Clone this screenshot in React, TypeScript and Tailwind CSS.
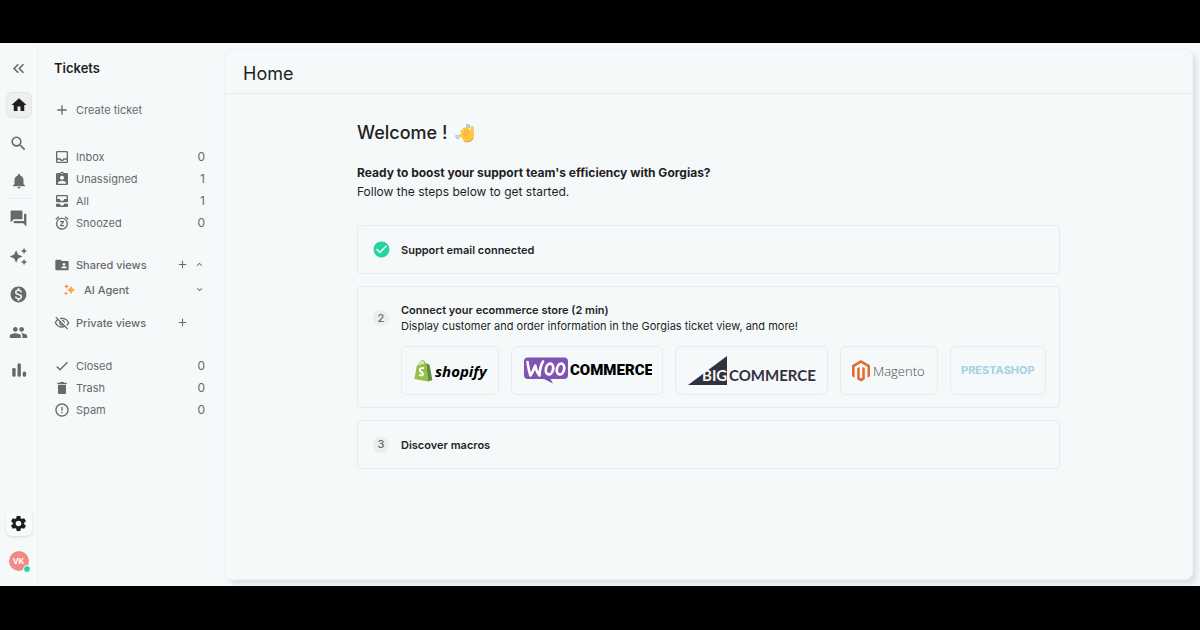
import type { ReactNode } from 'react';
import type { IconType } from 'react-icons';
import {
  MdAdd,
  MdAllInbox,
  MdAssignmentInd,
  MdAutoAwesome,
  MdCheck,
  MdCheckCircle,
  MdDelete,
  MdErrorOutline,
  MdExpandLess,
  MdExpandMore,
  MdFolderShared,
  MdForum,
  MdHome,
  MdKeyboardDoubleArrowLeft,
  MdMonetizationOn,
  MdNotifications,
  MdOutlineInbox,
  MdOutlineVisibilityOff,
  MdPeople,
  MdSearch,
  MdSettings,
  MdSnooze,
} from 'react-icons/md';

type View = { label: string; count: number; icon: IconType };

const inboxViews: View[] = [
  { label: 'Inbox', count: 0, icon: MdOutlineInbox },
  { label: 'Unassigned', count: 1, icon: MdAssignmentInd },
  { label: 'All', count: 1, icon: MdAllInbox },
  { label: 'Snoozed', count: 0, icon: MdSnooze },
];

const systemViews: View[] = [
  { label: 'Closed', count: 0, icon: MdCheck },
  { label: 'Trash', count: 0, icon: MdDelete },
  { label: 'Spam', count: 0, icon: MdErrorOutline },
];

function StatsIcon() {
  return (
    <svg viewBox="0 0 24 24" className="size-[18px]" fill="currentColor" aria-hidden="true">
      <rect x="3" y="9" width="4.5" height="12" rx="2" />
      <rect x="10" y="3" width="4.5" height="18" rx="2" />
      <rect x="17" y="14" width="4.5" height="7" rx="2" />
    </svg>
  );
}

function Sparkles() {
  return (
    <svg viewBox="0 0 24 24" className="size-3" aria-hidden="true">
      <path d="M14 3c1 5 3 7 9 9-6 1-8 4-9 10-1-6-3-9-9-10 6-2 8-4 9-9z" fill="#f6a93c" />
      <path d="M5 0l1.500 3.500L10 5 6.500 6.500 5 10 3.500 6.500 0 5l3.500-1.500zM4 14l1.200 3.800L9 19l-3.800 1.200L4 24l-1.200-3.800L-1 19l3.800-1.200z" fill="#f08a5d" />
    </svg>
  );
}

function Wave() {
  return (
    <svg viewBox="0 0 20 20" className="size-5" role="img" aria-label="Waving hand">
      <g stroke="#ffc642" strokeWidth="3" strokeLinecap="round">
        <path d="M12 15 5.800 12.200M12 13 6.800 8.500M13 11 9.200 5.800M15 11l-3-5.500M17.200 11V4.500" />
      </g>
      <path d="M9 9.500 15 7c2.500-.2 4 1 4 4.500 0 4.500-2.500 7.500-6 7.500-3 0-5.500-2-6.500-4.500z" fill="#ffc642" />
      <path d="M8 11 11 13M9.200 8.200l3 3.300M11.800 7l2 3.200" stroke="#e89b2c" strokeWidth=".7" strokeLinecap="round" />
      <path d="M9 18.300c3 1.500 7 .8 9-3" stroke="#f0902c" strokeWidth=".9" fill="none" strokeLinecap="round" />
      <path d="M11.500 1.800c1.700-.8 3.500.3 3.300 2.200M11.800 3.600c.8-.3 1.500.1 1.500.9M1 12.500c-.5 1.800.9 3.300 2.800 2.800M2.800 12.300c-.1.800.4 1.300 1.200 1.300" stroke="#6d9cc0" strokeWidth="1" fill="none" strokeLinecap="round" />
    </svg>
  );
}

function ShopifyLogo() {
  return (
    <svg viewBox="-2 0 76 26" className="h-[26px] w-[76px]" role="img" aria-label="Shopify">
      <g transform="translate(0 .5) scale(.94)">
        <path d="M3 7.500 13 5l2 19.500-14.500-2.600z" fill="#95bf47" />
        <path d="M13 5l3.500 1.700L19.500 23 15 24.500z" fill="#5e8e3e" />
        <path d="M5 8c.3-4.200 3-6.600 4.800-5.700 1.200.6 1.400 2.300 1.300 4M7.800 7c.2-2.800 2-4.600 3.400-3.600.8.600 1 1.600 1 2.500" stroke="#95bf47" strokeWidth="1" fill="none" />
        <path d="M10.700 10.500c-2.800-1.200-4.800.2-4.500 2 .3 1.800 3.500 2 3.300 4.300-.2 1.800-2.300 1.600-4 .3" stroke="#fff" strokeWidth="2.100" fill="none" />
      </g>
      <text x="21" y="19" className="fill-black font-['Open_Sans'] text-[15px] font-bold italic">shopify</text>
    </svg>
  );
}

function WooLogo() {
  return (
    <svg viewBox="-2 0 130 28" className="h-7 w-[130px]" role="img" aria-label="WooCommerce">
      <path d="M4 .5h36a4 4 0 0 1 4 4V18a4 4 0 0 1-4 4H26.500l2.500 4.500L20 22H4a4 4 0 0 1-4-4V4.500a4 4 0 0 1 4-4z" fill="#7f54b3" />
      <path d="M3.500 5c.8 5.500 1.600 10 3 13.500 2-3 3.500-6.500 4.800-10 .8 4.400 2 7.500 4.200 10C15.700 13 16.700 8.500 19 4.500" stroke="#fff" strokeWidth="2.600" fill="none" strokeLinecap="round" strokeLinejoin="round" />
      <ellipse cx="25.500" cy="12" rx="3.600" ry="5.500" stroke="#fff" strokeWidth="2.700" fill="none" transform="rotate(12 25.500 12)" />
      <ellipse cx="36.500" cy="12" rx="3.600" ry="5.500" stroke="#fff" strokeWidth="2.700" fill="none" transform="rotate(12 36.500 12)" />
      <text x="46" y="18" className="fill-black font-['Roboto'] text-[15px] font-black">COMMERCE</text>
    </svg>
  );
}

function BigCommerceLogo() {
  return (
    <svg viewBox="-2 0 131 30" className="h-[30px] w-[131px]" role="img" aria-label="BigCommerce">
      <path d="M0 29 39 0v29z" fill="#34313f" />
      <text x="14" y="25" className="fill-[#f6f9fa] font-['Lato'] text-[15px] font-bold">BIG</text>
      <text x="41" y="25" className="fill-[#34313f] font-['Lato'] text-[15px] font-bold">COMMERCE</text>
    </svg>
  );
}

function MagentoLogo() {
  return (
    <svg viewBox="-1 0 76 22" className="h-[22px] w-[76px]" role="img" aria-label="Magento">
      <path d="M9 0l9 5.200v11L15.500 17.700V6.700L9 3 2.600 6.700v11L0 16.200v-11z" fill="#e26a2c" />
      <path d="M5.200 8.200l2.500-1.500v11L9 18.500l1.300-.8v-11l2.500 1.500v11L9 21.500l-3.800-2.300z" fill="#e26a2c" />
      <text x="21" y="16" className="fill-[#4d4d4d] font-['Open_Sans'] text-[13px] font-light">Magento</text>
    </svg>
  );
}

function RailButton({ label, active, children }: { label: string; active?: boolean; children: ReactNode }) {
  return (
    <button
      type="button"
      aria-label={label}
      className={`flex size-[26px] items-center justify-center rounded-md ${
        active ? 'border border-[#e3e5e6] bg-[#eeeff0] text-[#1f1f1f]' : 'text-[#696969]'
      }`}
    >
      {children}
    </button>
  );
}

function ViewList({ views }: { views: View[] }) {
  return (
    <ul>
      {views.map(({ label, count, icon: Icon }) => (
        <li key={label}>
          <a href="#" className="flex h-[22px] items-center pr-[19px] pl-4">
            <Icon className="size-4" />
            <span className="ml-1.5 flex-1">{label}</span>
            <span className="text-[12px]">{count}</span>
          </a>
        </li>
      ))}
    </ul>
  );
}

function Step({ marker, title, children }: { marker: ReactNode; title: string; children?: ReactNode }) {
  return (
    <li
      className={`flex min-h-[49px] rounded border border-[#e9ecee] px-[14px] ${
        children ? 'pt-[15px] pb-3' : 'items-center'
      }`}
    >
      <div className="mr-[11px] flex w-[18px] shrink-0 justify-center">{marker}</div>
      <div className="min-w-0">
        <h3 className="text-[11px] leading-4 font-semibold">{title}</h3>
        {children}
      </div>
    </li>
  );
}

function StepNumber({ n }: { n: number }) {
  return (
    <span className="flex size-4 items-center justify-center rounded-full bg-[#ededee] text-[11px] font-medium text-[#696969]">
      {n}
    </span>
  );
}

function StoreButton({ children }: { children: ReactNode }) {
  return (
    <button type="button" className="flex h-[49px] items-center rounded-md border border-[#e9ecee] px-[10px]">
      {children}
    </button>
  );
}

export default function App() {
  return (
    <div className="flex h-screen flex-col bg-black pt-[43px] pb-11 font-['Inter',sans-serif] text-[#1f1f1f]">
      <div className="flex min-h-0 flex-1 overflow-hidden bg-[#f6f9fa]">
        <nav aria-label="Main" className="flex w-[38px] shrink-0 flex-col items-center border-r border-[#eff2f4] pt-3 pb-[15px]">
          <RailButton label="Collapse">
            <MdKeyboardDoubleArrowLeft className="size-[19px]" />
          </RailButton>
          <div className="mt-[11px] flex w-[26px] flex-col gap-3 border-b border-[#eceff1] pb-1">
            <RailButton label="Home" active>
              <MdHome className="size-[18px]" />
            </RailButton>
            <RailButton label="Search">
              <MdSearch className="size-[19px]" />
            </RailButton>
            <RailButton label="Notifications">
              <MdNotifications className="size-[18px]" />
            </RailButton>
          </div>
          <div className="flex flex-col gap-3 pt-1.5">
            <RailButton label="Tickets">
              <MdForum className="size-[19px]" />
            </RailButton>
            <RailButton label="Automate">
              <MdAutoAwesome className="size-[19px]" />
            </RailButton>
            <RailButton label="Convert">
              <MdMonetizationOn className="size-[19px]" />
            </RailButton>
            <RailButton label="Customers">
              <MdPeople className="size-[19px]" />
            </RailButton>
            <RailButton label="Statistics">
              <StatsIcon />
            </RailButton>
          </div>
          <button
            type="button"
            aria-label="Settings"
            className="mt-auto flex size-[26px] items-center justify-center rounded-md bg-[#f8fbfc] shadow-sm"
          >
            <MdSettings className="size-[19px]" />
          </button>
          <button
            type="button"
            aria-label="Account"
            className="relative mt-[15px] flex size-5 items-center justify-center rounded-full bg-[#f28b86] text-[8px] font-bold text-white"
          >
            VK
            <span className="absolute -right-0.5 -bottom-0.5 size-2 rounded-full border border-white bg-[#24d69d]" />
          </button>
        </nav>

        <aside className="w-[186px] shrink-0 text-[11px] leading-4 text-[#696969]">
          <h2 className="mt-[17px] ml-4 text-[13px] font-semibold text-[#1f1f1f]">Tickets</h2>
          <button type="button" className="mt-[26px] ml-4 flex items-center gap-1.5">
            <MdAdd className="size-4" />
            Create ticket
          </button>
          <nav aria-label="Views" className="mt-7">
            <ViewList views={inboxViews} />
            <div className="mt-[18px] flex h-[25px] items-center pr-[19px] pl-4 font-medium">
              <MdFolderShared className="size-4" />
              <span className="ml-1.5 flex-1">Shared views</span>
              <button type="button" aria-label="Add shared view">
                <MdAdd className="size-[13px]" />
              </button>
              <button type="button" aria-label="Collapse shared views" className="ml-[5px]">
                <MdExpandLess className="size-[11px]" />
              </button>
            </div>
            <div className="flex h-[25px] items-center pr-[19px] pl-[26px] font-medium">
              <Sparkles />
              <span className="ml-2 flex-1">AI Agent</span>
              <button type="button" aria-label="Expand AI Agent">
                <MdExpandMore className="size-[11px]" />
              </button>
            </div>
            <div className="mt-2 flex h-[25px] items-center pr-[35px] pl-4 font-medium">
              <MdOutlineVisibilityOff className="size-4" />
              <span className="ml-1.5 flex-1">Private views</span>
              <button type="button" aria-label="Add private view">
                <MdAdd className="size-[13px]" />
              </button>
            </div>
            <div className="mt-5">
              <ViewList views={systemViews} />
            </div>
          </nav>
        </aside>

        <main className="mt-1.5 mr-[7px] mb-1.5 min-w-0 flex-1 rounded-lg border border-[#f0f3f5] bg-[#f5f9fa] shadow-[4px_4px_5px_0_#dce1e6]">
          <header className="flex h-11 items-center border-b border-[#e9eced] pt-1 pl-[18px]">
            <h1 className="text-[18px] leading-6">Home</h1>
          </header>
          <div className="mx-auto max-w-[703px] pt-[27px]">
            <h2 className="flex items-center gap-2 text-[18px] leading-6 font-medium">
              Welcome ! <Wave />
            </h2>
            <p className="mt-[18px] text-[12px] leading-[19px]">
              <strong className="font-bold">Ready to boost your support team's efficiency with Gorgias?</strong>
              <br />
              Follow the steps below to get started.
            </p>
            <ol className="mt-6 flex flex-col gap-3">
              <Step marker={<MdCheckCircle className="size-[19px] shrink-0 text-[#24d69d]" />} title="Support email connected" />
              <Step
                marker={
                  <div className="pt-2">
                    <StepNumber n={2} />
                  </div>
                }
                title="Connect your ecommerce store (2 min)"
              >
                <p className="text-[11px] leading-4">
                  Display customer and order information in the Gorgias ticket view, and more!
                </p>
                <div className="mt-3 flex gap-3">
                  <StoreButton>
                    <ShopifyLogo />
                  </StoreButton>
                  <StoreButton>
                    <WooLogo />
                  </StoreButton>
                  <StoreButton>
                    <BigCommerceLogo />
                  </StoreButton>
                  <StoreButton>
                    <MagentoLogo />
                  </StoreButton>
                  <StoreButton>
                    <span className="text-[11px] font-bold text-[#a4cfe2]">PRESTASHOP</span>
                  </StoreButton>
                </div>
              </Step>
              <Step marker={<StepNumber n={3} />} title="Discover macros" />
            </ol>
          </div>
        </main>
      </div>
    </div>
  );
}
